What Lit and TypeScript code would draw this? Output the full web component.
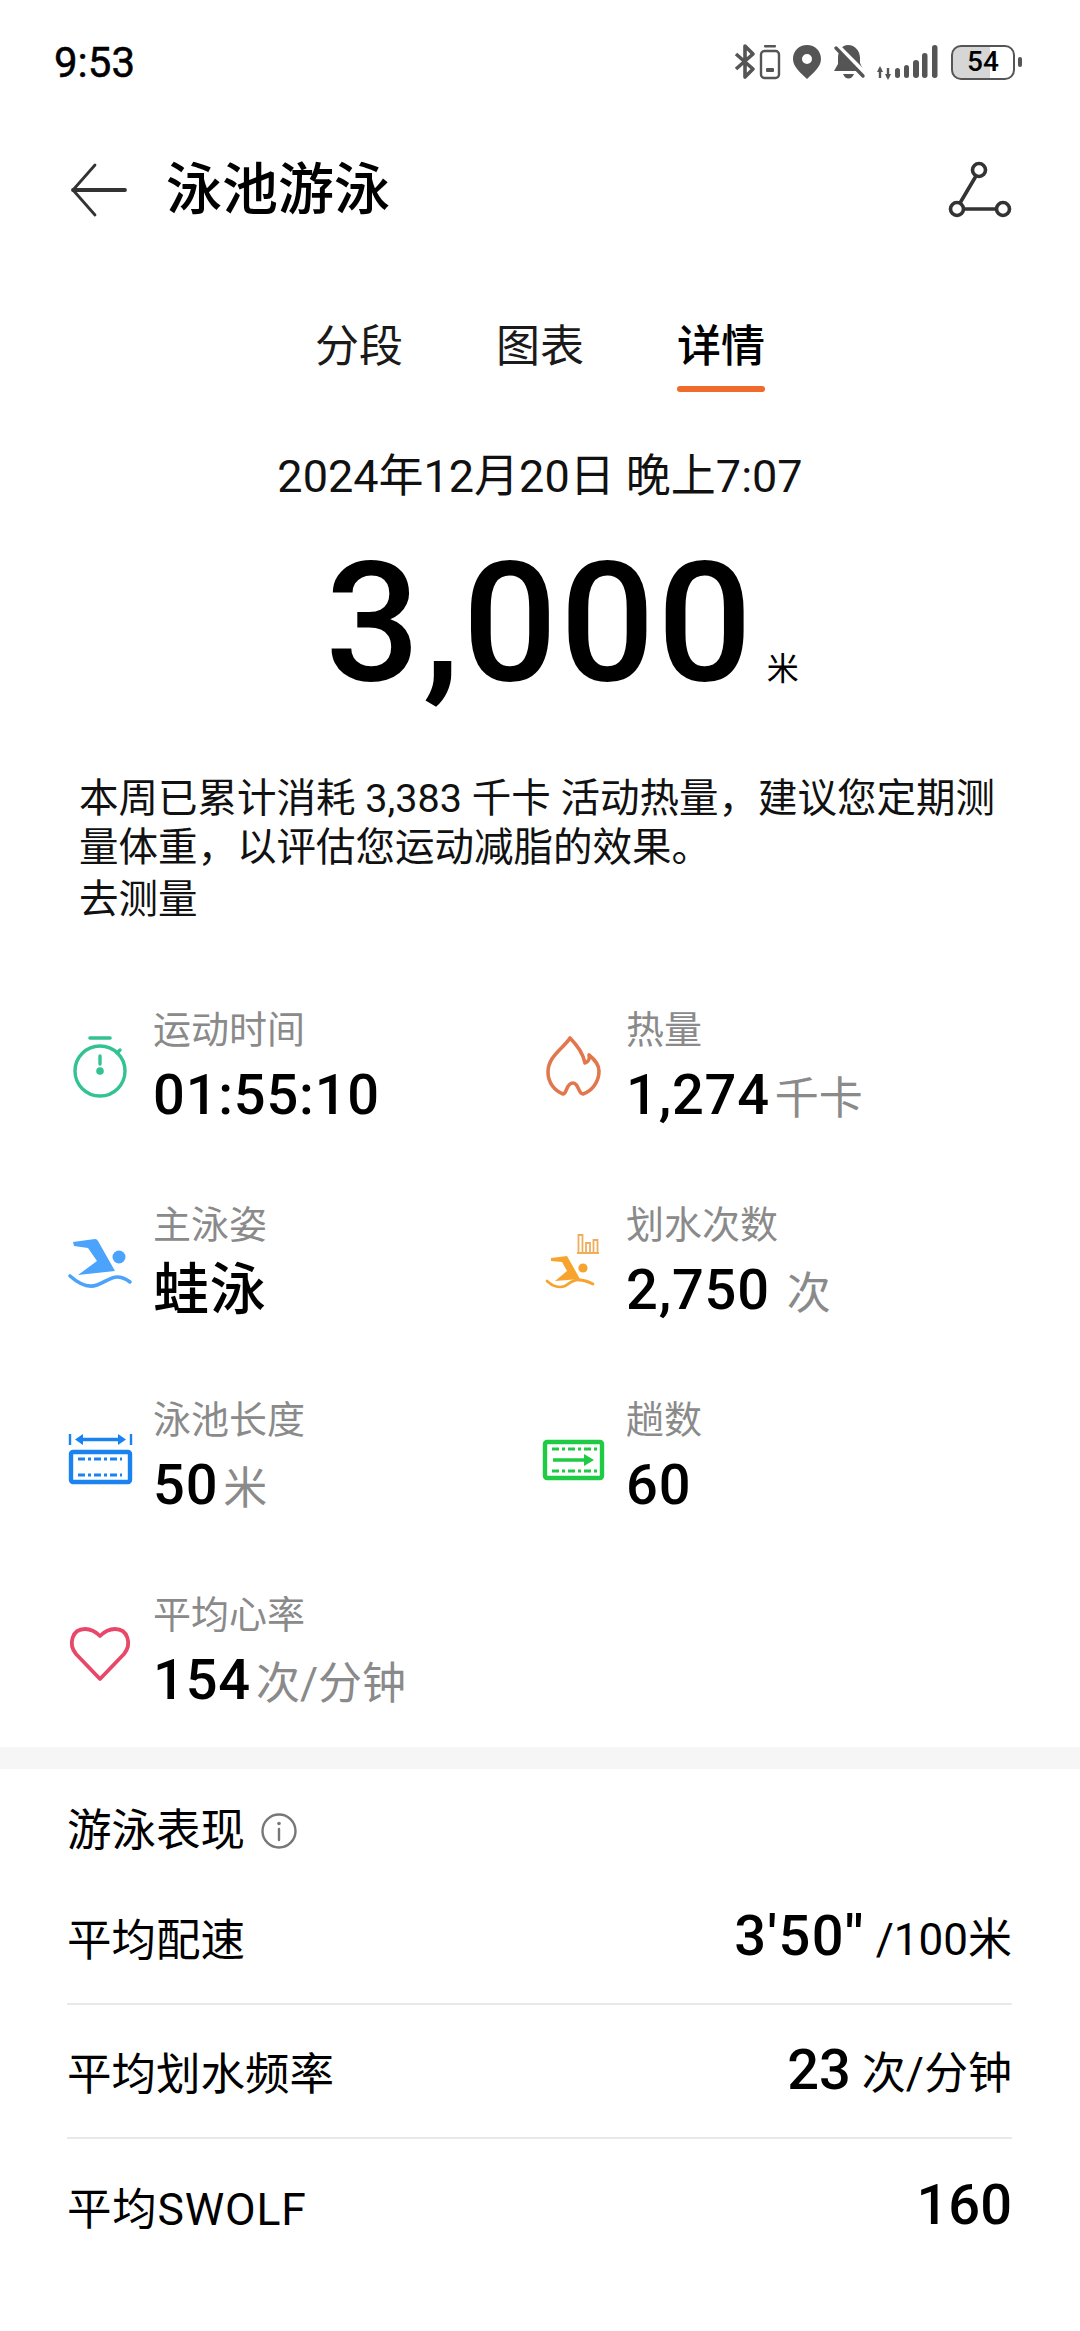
import { LitElement, html, css } from 'lit';
import { customElement } from 'lit/decorators.js';

const icons = {
  timer: html`<svg width="66" height="66" viewBox="0 0 66 66" fill="none" stroke="#32c391" stroke-width="3.4" stroke-linecap="round">
    <circle cx="33" cy="37" r="25"/><path d="M23 4H43" stroke-width="3.6"/><path d="M50 19L53 16"/><path d="M33 22V30"/>
    <circle cx="33" cy="37" r="3.8" fill="#32c391" stroke="none"/></svg>`,
  flame: html`<svg width="66" height="66" viewBox="0 0 66 66" fill="none" stroke="#e2764c" stroke-width="3.6" stroke-linejoin="round">
    <path d="M30 4C24 14 8 22 8 38C8 49 15 57 23 60C27 60 26 49 33 49C39 49 38 60 43 60C52 57 59 48 59 37C59 30 54 25 49 21C50 25 48 28 45 29C43 19 37 11 30 4Z"/></svg>`,
  swim: html`<svg width="66" height="66" viewBox="0 0 66 66" fill="#4ba3fb">
    <path d="M6 13L28 10Q30 10 31 12L48 42L11 46L30 32L21 19L7 17Z"/><circle cx="52" cy="28" r="6.5"/>
    <path d="M3 47C12 55 22 59 30 56C38 53 44 48 50 48C55 48 59 50 63 53" fill="none" stroke="#4ba3fb" stroke-width="3.6" stroke-linecap="round"/></svg>`,
  strokes: html`<svg width="66" height="66" viewBox="0 0 66 66" fill="#f7a42e">
    <path d="M11 29L27 27L40 50L15 52L27 42L22 33L11 32Z"/><circle cx="43" cy="39" r="4.6"/>
    <path d="M7 52C13 58 20 59 25 57C30 54 34 50 39 51C44 51 49 53 53 55" fill="none" stroke="#f7a42e" stroke-width="2.8" stroke-linecap="round"/>
    <path d="M37 24H59M38.500 24V6H42.500V24M46 24V14H50V24M53.500 24V11H57.500V24" fill="none" stroke="#eeae5c" stroke-width="1.8"/></svg>`,
  length: html`<svg width="66" height="66" viewBox="0 0 66 66" fill="none" stroke="#1b83f0">
    <path d="M3 10V21M64 10V21" stroke-width="2.400"/><path d="M12 15.500H55" stroke-width="3.400"/>
    <path d="M8 15.500L16 10V21ZM59 15.500L51 10V21Z" fill="#1b83f0" stroke="none"/>
    <rect x="4" y="28" width="59" height="30" rx="2" stroke-width="4.400"/>
    <path d="M11 35H55M11 51H55" stroke-width="3" stroke-dasharray="7 3 3 3"/></svg>`,
  laps: html`<svg width="66" height="66" viewBox="0 0 66 66" fill="none" stroke="#1fca44">
    <rect x="5" y="18" width="57" height="36" rx="2" stroke-width="4.400"/>
    <path d="M12 25H57M12 47H57" stroke-width="3" stroke-dasharray="7 3 3 3"/>
    <path d="M13 36H46" stroke-width="3.600"/><path d="M54 36L44 30V42Z" fill="#1fca44" stroke="none"/></svg>`,
  heart: html`<svg width="66" height="66" viewBox="0 0 66 66" fill="none" stroke="#e8476a" stroke-width="3.8" stroke-linejoin="round">
    <path d="M33 60L9 35C1 25 5 10 18 10C24 10 29 13 33 17C37 13 42 10 48 10C61 10 65 25 57 35Z"/></svg>`,
};

const metrics = [
  { icon: icons.timer, label: '运动时间', value: '01:55:10', unit: '' },
  { icon: icons.flame, label: '热量', value: '1,274', unit: '千卡' },
  { icon: icons.swim, label: '主泳姿', value: '蛙泳', unit: '' },
  { icon: icons.strokes, label: '划水次数', value: '2,750', unit: ' 次', wide: true },
  { icon: icons.length, label: '泳池长度', value: '50', unit: '米' },
  { icon: icons.laps, label: '趟数', value: '60', unit: '' },
  { icon: icons.heart, label: '平均心率', value: '154', unit: '次/分钟' },
];

@customElement('app-root')
export class AppRoot extends LitElement {
  static styles = css`
    :host {
      display: block;
      width: 1080px;
      height: 2331px;
      overflow: hidden;
      background: #fff;
      color: #000;
      font-family: Roboto, "Noto Sans CJK SC", sans-serif;
    }
    .status {
      height: 124px;
      display: flex;
      align-items: center;
      justify-content: space-between;
      padding: 0 58px 0 54px;
    }
    .time { font-size: 42px; font-weight: 400; -webkit-text-stroke: 0.5px #000; }
    .tray { display: flex; align-items: center; }
    .batt {
      box-sizing: border-box;
      width: 64px;
      height: 35px;
      margin-left: 13px;
      border: 2.500px solid #555;
      border-radius: 10px;
      background: linear-gradient(90deg, #d6d6d6 62%, #fff 62%);
      font-size: 28px;
      font-weight: 500;
      line-height: 30px;
      text-align: center;
    }
    .nub { width: 4px; height: 10px; margin-left: 3px; border-radius: 2px; background: #555; }
    .nav {
      height: 132px;
      display: flex;
      align-items: center;
      padding: 0 68px 0 70px;
    }
    .nav h1 { margin: 0 0 0 38px; flex: 1; font-size: 56px; font-weight: 500; line-height: 70px; }
    .tabs {
      display: flex;
      justify-content: center;
      gap: 93px;
      padding-top: 61px;
    }
    .tab { font-size: 44px; line-height: 60px; color: #1a1a1a; }
    .tab.on { font-weight: 500; color: #000; }
    .tab.on::after {
      content: '';
      display: block;
      height: 6px;
      margin-top: 9px;
      border-radius: 3px;
      background: #f06a2c;
    }
    .tab:not(.on) { padding-bottom: 15px; }
    .date { margin-top: 60px; font-size: 45px; line-height: 50px; text-align: center; color: #111; }
    .hero {
      display: grid;
      grid-template-columns: 1fr auto 1fr;
      align-items: baseline;
      margin-top: 36px;
    }
    .hero b { grid-column: 2; font-size: 167px; font-weight: 500; line-height: 170px; letter-spacing: 2.500px; }
    .hero span { grid-column: 3; margin-left: 12px; font-size: 32px; }
    .note { margin: 66px 79px 0; font-size: 39.500px; line-height: 49px; color: #111; }
    .note div { margin-top: 3px; }
    .grid {
      display: grid;
      grid-template-columns: 473px 1fr;
      row-gap: 71px;
      margin-top: 81px;
      padding-left: 67px;
    }
    .cell { display: flex; align-items: center; gap: 20px; }
    .cell svg { flex: none; display: block; }
    .lab { font-size: 38px; line-height: 50px; color: #8a8a8a; }
    .val {
      height: 68px;
      margin-top: 6px;
      font-size: 56px;
      font-weight: 500;
      line-height: 68px;
      letter-spacing: 0.8px;
      white-space: pre;
    }
    .val span { margin-left: 5px; font-size: 44px; font-weight: 400; color: #8a8a8a; letter-spacing: 0; }
    .val span.wide { margin-left: 6px; }
    .band { height: 22px; margin-top: 33px; background: #f6f6f6; }
    .perf { padding: 32px 68px 0 67px; }
    .perf h2 {
      display: flex;
      align-items: center;
      gap: 15px;
      margin: 0 0 10px;
      font-size: 44.500px;
      font-weight: 400;
      line-height: 60px;
    }
    .row {
      box-sizing: border-box;
      display: flex;
      align-items: center;
      justify-content: space-between;
      height: 134px;
      padding-bottom: 2px;
      border-bottom: 2px solid #e9e9e9;
      font-size: 44.500px;
    }
    .row:last-child { border-bottom: none; }
    .row b { font-size: 56px; font-weight: 500; }
    .row b.pace { letter-spacing: 1.500px; }
    .row span { font-size: 44px; }
    .row .swolf { letter-spacing: 0.8px; }
  `;

  render() {
    return html`
      <div class="status">
        <div class="time">9:53</div>
        <div class="tray">
          <svg width="205" height="36" viewBox="0 0 205 36" fill="#555">
            <path d="M3 10L20 25L12 33V2L20 10L3 25" fill="none" stroke="#555" stroke-width="3.600" stroke-linejoin="round"/>
            <rect x="28" y="7" width="18" height="27" rx="3.500" fill="none" stroke="#555" stroke-width="2.400"/>
            <rect x="31" y="1" width="12" height="2.500" rx="1"/><rect x="33" y="24" width="8" height="4" rx="1"/>
            <path fill-rule="evenodd" d="M74 1C82 1 88 7 88 15C88 23 80 29 74 35C68 29 60 23 60 15C60 7 66 1 74 1ZM74 10A5 5 0 1 0 74 20A5 5 0 1 0 74 10Z"/>
            <path d="M115 1C122 1 127 7 127 14V19L131 27H101L105 20V14C105 7 109 1 115 1ZM110 30H121Q119 34.500 115.500 34.500T110 30Z"/>
            <path d="M105 2L133 30" stroke="#fff" stroke-width="4"/><path d="M103 4L130 32" stroke="#555" stroke-width="3.400" stroke-linecap="round"/>
            <path d="M147 24V34M155 24V34" stroke="#555" stroke-width="2.400"/><path d="M147 22L144 28H150ZM155 36L152 30H158Z"/>
            <rect x="162" y="24" width="5" height="10" rx="2.500"/><rect x="171" y="21" width="5" height="13" rx="2.500"/>
            <rect x="180" y="16" width="6" height="18" rx="3"/><rect x="189" y="9" width="5.500" height="25" rx="2.700"/>
            <rect x="199" y="1" width="5.500" height="33" rx="2.700"/>
          </svg>
          <div class="batt">54</div>
          <div class="nub"></div>
        </div>
      </div>

      <div class="nav">
        <svg width="58" height="54" viewBox="0 0 58 54" fill="none" stroke="#333" stroke-linecap="round" stroke-linejoin="round">
          <path d="M3 27H55" stroke-width="3.800"/><path d="M25 2L3 27L25 52" stroke-width="2.800"/>
        </svg>
        <h1>泳池游泳</h1>
        <svg width="64" height="62" viewBox="0 0 64 62" fill="none" stroke="#333" stroke-width="3.600">
          <circle cx="31" cy="11" r="6.500"/><circle cx="9" cy="50" r="6.500"/><circle cx="55" cy="50" r="6.500"/>
          <path d="M28 17L12 44M16 50H48"/>
        </svg>
      </div>

      <div class="tabs">
        <div class="tab">分段</div>
        <div class="tab">图表</div>
        <div class="tab on">详情</div>
      </div>

      <div class="date">2024年12月20日 晚上7:07</div>
      <div class="hero"><b>3,000</b><span>米</span></div>

      <div class="note">
        本周已累计消耗 3,383 千卡 活动热量，建议您定期测量体重，以评估您运动减脂的效果。
        <div>去测量</div>
      </div>

      <div class="grid">
        ${metrics.map(
          (m) => html`
            <div class="cell">
              ${m.icon}
              <div>
                <div class="lab">${m.label}</div>
                <div class="val">${m.value}${m.unit ? html`<span class=${m.wide ? 'wide' : ''}>${m.unit}</span>` : ''}</div>
              </div>
            </div>
          `
        )}
      </div>

      <div class="band"></div>

      <div class="perf">
        <h2>
          游泳表现
          <svg width="38" height="38" viewBox="0 0 38 38" fill="none" stroke="#777" stroke-width="2.400">
            <circle cx="19" cy="19" r="16.500"/><path d="M19 17V28" stroke-linecap="round"/>
            <circle cx="19" cy="11.500" r="1.800" fill="#777" stroke="none"/>
          </svg>
        </h2>
        <div class="row"><div>平均配速</div><div><b class="pace">3'50''</b> <span>/100米</span></div></div>
        <div class="row"><div>平均划水频率</div><div><b>23</b> <span>次/分钟</span></div></div>
        <div class="row"><div class="swolf">平均SWOLF</div><div><b>160</b></div></div>
      </div>
    `;
  }
}
